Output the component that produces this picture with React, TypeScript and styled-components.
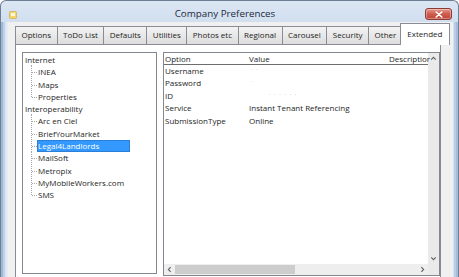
import React from "react";
import styled, { createGlobalStyle } from "styled-components";

const GlobalStyle = createGlobalStyle`
  html, body { margin: 0; padding: 0; width: 459px; height: 277px; overflow: hidden; background: #ffffff; }
  #root { width: 459px; height: 277px; }
  *, *::before, *::after { box-sizing: border-box; }
`;

const UI_FONT = `"Open Sans", "Liberation Sans", sans-serif`;

const Window = styled.div`
  width: 459px;
  height: 277px;
  display: flex;
  flex-direction: column;
  background: linear-gradient(#dbe6f3, #c7d8ec 40px, #c2d4ea);
  border: 1px solid #6f7f93;
  border-bottom: none;
  border-radius: 6px 6px 0 0;
  overflow: hidden;
  font-family: ${UI_FONT};
  color: #1e1e1e;
`;

const TitleBar = styled.div`
  height: 21px;
  flex: none;
  display: grid;
  grid-template-columns: auto 1fr auto;
  align-items: center;
  padding: 0 6px 0 8px;
`;

const AppIcon = styled.svg`
  width: 8px;
  height: 8px;
  margin-top: 6px;
`;

const Title = styled.div`
  text-align: center;
  font-size: 9.8px;
  color: #1c2a3c;
  padding-top: 4px;
  padding-left: 8px;
`;

const CloseButton = styled.div`
  width: 27px;
  height: 12px;
  margin-top: 5px;
  border: 1px solid #8c3b33;
  border-radius: 3px;
  background: linear-gradient(#e69a8f, #cd5d4f 50%, #c04535);
  display: flex;
  align-items: center;
  justify-content: center;
  box-shadow: inset 0 0 0 1px rgba(255, 255, 255, 0.35);
`;

const Body = styled.div`
  flex: 1;
  display: flex;
  min-height: 0;
`;

const LeftFrame = styled.div`
  width: 7px;
  flex: none;
  background: linear-gradient(to right, #9fb7d6 0 2px, #bcd1ea 2px 4px, #dce8f5 4px 6px, #ece9f1 6px 7px);
`;

const RightFrame = styled.div`
  width: 5px;
  flex: none;
  background: linear-gradient(to right, #d4e2f2 0 1px, #b7cce6 1px 3px, #a6bcd9 3px 5px);
`;

const Client = styled.div`
  flex: 1;
  background: #f0f0f0;
  padding: 1px 12px 0 7px;
  display: flex;
  flex-direction: column;
  min-width: 0;
`;

const TabStrip = styled.div`
  height: 21px;
  flex: none;
  display: flex;
  align-items: flex-end;
`;

const Tab = styled.div<{ $active?: boolean }>`
  position: relative;
  height: ${(p) => (p.$active ? "22px" : "18px")};
  margin: ${(p) => (p.$active ? "0 -2px -1px -2px" : "0 -1px 0 0")};
  z-index: ${(p) => (p.$active ? 1 : 0)};
  padding: 0 ${(p) => (p.$active ? "6.5px" : "5.5px")};
  border: 1px solid #898c95;
  border-bottom: none;
  background: ${(p) => (p.$active ? "#ffffff" : "linear-gradient(#f3f3f3, #e8e8e8 50%, #dddddd)")};
  font-size: 8px;
  line-height: ${(p) => (p.$active ? "19px" : "16px")};
  white-space: nowrap;
  color: #1e1e1e;
`;

const Panel = styled.div`
  flex: 1;
  min-height: 0;
  display: flex;
  gap: 6px;
  align-items: flex-start;
  padding: 7px 0 0 6px;
  background: #ffffff;
  border: 1px solid #898c95;
  border-bottom: none;
`;

const TreeBox = styled.div`
  width: 135px;
  height: 222px;
  flex: none;
  border: 1px solid #828790;
  background: #ffffff;
  padding: 1px 0 0 1px;
  font-size: 8px;
  line-height: 12.3px;
`;

const GroupLabel = styled.div`
  padding-left: 1px;
  white-space: nowrap;
`;

const ChildList = styled.div`
  padding-left: 13px;
`;

const ChildItem = styled.div<{ $last?: boolean }>`
  position: relative;
  height: 12.3px;
  &::before {
    content: "";
    position: absolute;
    left: -6px;
    top: -1px;
    height: ${(p) => (p.$last ? "7px" : "calc(100% + 1px)")};
    border-left: 1px dotted #a8a8a8;
  }
  &::after {
    content: "";
    position: absolute;
    left: -5px;
    top: 6px;
    width: 5px;
    border-top: 1px dotted #a8a8a8;
  }
`;

const ChildLabel = styled.span<{ $selected?: boolean }>`
  display: inline-block;
  height: 12px;
  padding: 0 1px;
  width: ${(p) => (p.$selected ? "93px" : "auto")};
  background: ${(p) => (p.$selected ? "#3399ff" : "transparent")};
  outline: ${(p) => (p.$selected ? "1px solid #2b7fd6" : "none")};
  outline-offset: -1px;
  color: ${(p) => (p.$selected ? "#ffffff" : "#1e1e1e")};
  white-space: nowrap;
  line-height: 12px;
`;

const GridBox = styled.div`
  flex: 1;
  height: 224px;
  border: 1px solid #828790;
  background: #ffffff;
  display: grid;
  grid-template-columns: 1fr 11px;
  grid-template-rows: 1fr 11px;
  font-size: 8px;
  min-width: 0;
`;

const GridContent = styled.div`
  min-width: 0;
  position: relative;
  z-index: 1;
`;

const GridRow = styled.div<{ $header?: boolean }>`
  display: grid;
  grid-template-columns: 84px 140px 1fr;
  height: ${(p) => (p.$header ? "12px" : "12.4px")};
  line-height: ${(p) => (p.$header ? "11px" : "12.4px")};
  border-bottom: ${(p) => (p.$header ? "1px solid #6d6d6d" : "none")};
  white-space: nowrap;
`;

const Cell = styled.div`
  padding-left: 1px;
`;

const Redacted = styled.span<{ $offset?: number }>`
  display: inline-block;
  margin-left: ${(p) => p.$offset || 0}px;
  color: #a9a9a9;
  filter: blur(0.7px);
  letter-spacing: 1px;
  font-size: 6px;
  vertical-align: top;
  line-height: 9px;
`;

const VScroll = styled.div`
  background: #eaeaea;
  display: flex;
  flex-direction: column;
  justify-content: space-between;
  align-items: center;
  padding: 3px 0 3px;
`;

const HScroll = styled.div`
  background: #eeeeee;
  display: flex;
  align-items: center;
  padding: 0 3px 0 3px;
  gap: 3px;
`;

const HThumb = styled.div`
  width: 120px;
  height: 9px;
  background: #cdcdcd;
`;

const HSpacer = styled.div`
  flex: 1;
`;

const Corner = styled.div`
  background: #eaeaea;
`;

const Chevron = ({ dir }: { dir: "up" | "down" | "left" | "right" }) => {
  const paths: Record<string, string> = {
    up: "M1 4 L3.5 1.5 L6 4",
    down: "M1 1.5 L3.5 4 L6 1.5",
    left: "M4 1 L1.5 3.5 L4 6",
    right: "M1.5 1 L4 3.5 L1.5 6",
  };
  const horiz = dir === "left" || dir === "right";
  return (
    <svg width={horiz ? 5 : 7} height={horiz ? 7 : 5} viewBox={horiz ? "0 0 5.5 7" : "0 0 7 5.5"}>
      <path d={paths[dir]} fill="none" stroke="#606060" strokeWidth="1.2" />
    </svg>
  );
};

const tabs = [
  "Options",
  "ToDo List",
  "Defaults",
  "Utilities",
  "Photos etc",
  "Regional",
  "Carousel",
  "Security",
  "Other",
  "Extended",
];

const groups = [
  { label: "Internet", items: ["INEA", "Maps", "Properties"] },
  {
    label: "Interoperability",
    items: [
      "Arc en Ciel",
      "BriefYourMarket",
      "Legal4Landlords",
      "MailSoft",
      "Metropix",
      "MyMobileWorkers.com",
      "SMS",
    ],
  },
];

const SELECTED = "Legal4Landlords";

type Row = { option: string; value?: string; redacted?: string; offset?: number };

const rows: Row[] = [
  { option: "Username", redacted: "· ·", offset: 2 },
  { option: "Password", redacted: "·", offset: 2 },
  { option: "ID", redacted: "· ·  ·  · ·  ·", offset: 20 },
  { option: "Service", value: "Instant Tenant Referencing" },
  { option: "SubmissionType", value: "Online" },
];

export default function App() {
  return (
    <>
      <GlobalStyle />
      <Window>
        <TitleBar>
          <AppIcon viewBox="0 0 8 8">
            <rect x="0.5" y="0.5" width="7" height="7" rx="1" fill="#f4d56a" stroke="#c9a23a" strokeWidth="0.6" />
            <rect x="2" y="2" width="4" height="3" fill="#fff8dc" />
          </AppIcon>
          <Title>Company Preferences</Title>
          <CloseButton>
            <svg width="8" height="7" viewBox="0 0 8 7">
              <path d="M1.2 1 L6.8 6 M6.8 1 L1.2 6" stroke="#ffffff" strokeWidth="1.6" strokeLinecap="round" />
            </svg>
          </CloseButton>
        </TitleBar>
        <Body>
          <LeftFrame />
          <Client>
            <TabStrip>
              {tabs.map((t) => (
                <Tab key={t} $active={t === "Extended"}>
                  {t}
                </Tab>
              ))}
            </TabStrip>
            <Panel>
              <TreeBox>
                {groups.map((g) => (
                  <div key={g.label}>
                    <GroupLabel>{g.label}</GroupLabel>
                    <ChildList>
                      {g.items.map((it, i) => (
                        <ChildItem key={it} $last={i === g.items.length - 1}>
                          <ChildLabel $selected={it === SELECTED}>{it}</ChildLabel>
                        </ChildItem>
                      ))}
                    </ChildList>
                  </div>
                ))}
              </TreeBox>
              <GridBox>
                <GridContent>
                  <GridRow $header>
                    <Cell>Option</Cell>
                    <Cell>Value</Cell>
                    <Cell>Descriptior</Cell>
                  </GridRow>
                  {rows.map((r) => (
                    <GridRow key={r.option}>
                      <Cell>{r.option}</Cell>
                      <Cell>
                        {r.value ?? <Redacted $offset={r.offset}>{r.redacted}</Redacted>}
                      </Cell>
                      <Cell />
                    </GridRow>
                  ))}
                </GridContent>
                <VScroll>
                  <Chevron dir="up" />
                  <Chevron dir="down" />
                </VScroll>
                <HScroll>
                  <Chevron dir="left" />
                  <HThumb />
                  <HSpacer />
                  <Chevron dir="right" />
                </HScroll>
                <Corner />
              </GridBox>
            </Panel>
          </Client>
          <RightFrame />
        </Body>
      </Window>
    </>
  );
}
